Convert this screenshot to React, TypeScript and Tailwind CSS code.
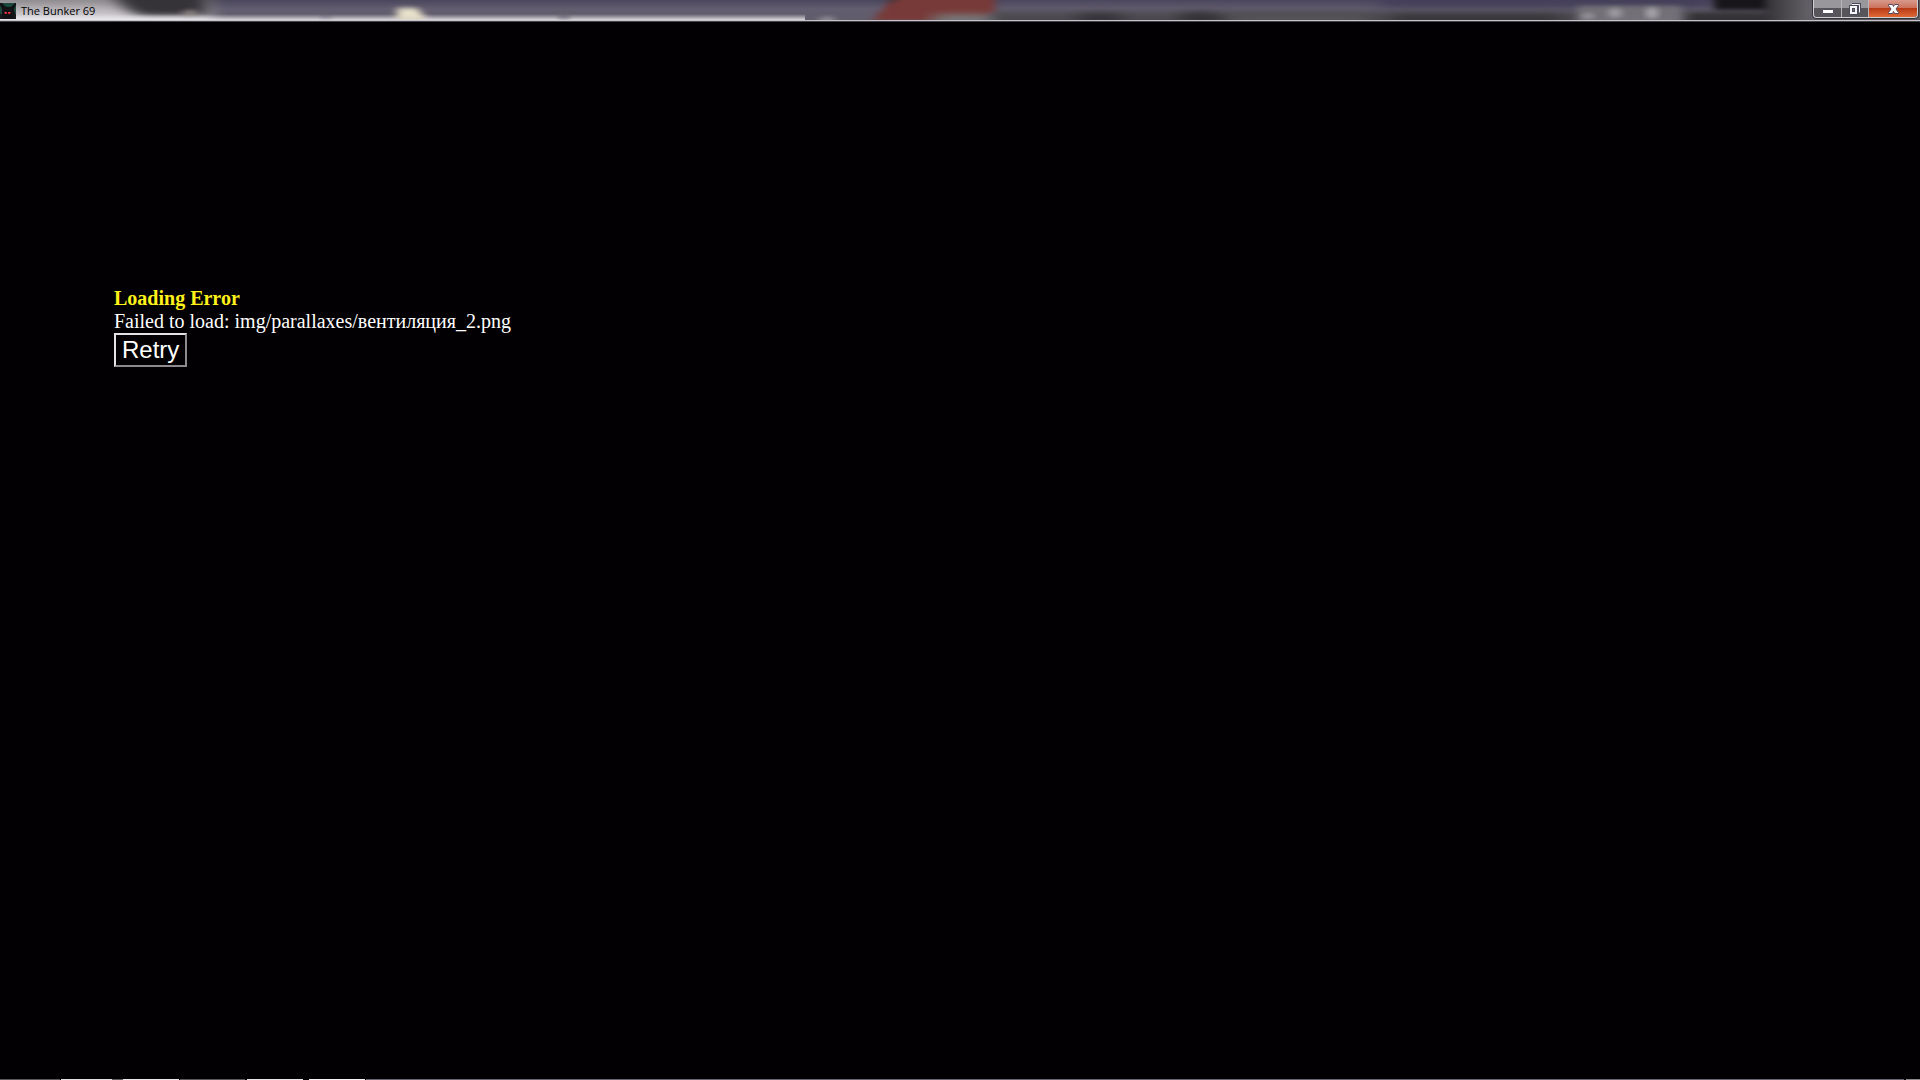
const taskbarStops = [
  { x: 0, w: 60, color: "#5d585f" },
  { x: 61, w: 51, color: "#e6e0e6" },
  { x: 112, w: 11, color: "#5f5a62" },
  { x: 123, w: 56, color: "#eee8ee" },
  { x: 180, w: 65, color: "#5d585f" },
  { x: 247, w: 56, color: "#ece6ec" },
  { x: 309, w: 56, color: "#f7f3f7" },
  { x: 366, w: 1538, color: "#6a6570" },
  { x: 1906, w: 14, color: "#8b8890" },
];

function GlassBackdrop() {
  return (
    <svg
      className="absolute inset-0 h-full w-full"
      viewBox="0 0 1920 22"
      preserveAspectRatio="none"
      aria-hidden="true"
    >
      <defs>
        <linearGradient id="base" x1="0" y1="0" x2="0" y2="1">
          <stop offset="0" stopColor="#4a465c" />
          <stop offset="0.4" stopColor="#625d6f" />
          <stop offset="1" stopColor="#615c69" />
        </linearGradient>
        <linearGradient id="glow" x1="0" y1="0" x2="0" y2="1">
          <stop offset="0" stopColor="#e8e5ea" stopOpacity="0" />
          <stop offset="1" stopColor="#f0edf2" />
        </linearGradient>
        <linearGradient id="left" x1="0" y1="0" x2="0" y2="1">
          <stop offset="0.2" stopColor="#8b878b" />
          <stop offset="0.5" stopColor="#c4c1c6" />
          <stop offset="0.8" stopColor="#e2e0e4" />
        </linearGradient>
        <linearGradient id="frame" x1="0" y1="0" x2="1" y2="0">
          <stop offset="0" stopColor="#343236" />
          <stop offset="1" stopColor="#6a676d" />
        </linearGradient>
        <filter id="soft" x="-20%" y="-80%" width="140%" height="260%" colorInterpolationFilters="sRGB">
          <feGaussianBlur stdDeviation="9 3" />
        </filter>
        <filter id="spot" x="-50%" y="-50%" width="200%" height="200%" colorInterpolationFilters="sRGB">
          <feGaussianBlur stdDeviation="4 2" />
        </filter>
      </defs>

      <rect width="1920" height="22" fill="url(#base)" />

      {/* windows behind the glass, left side */}
      <rect x="-40" y="-8" width="250" height="40" fill="url(#left)" filter="url(#soft)" />
      <path d="M108 -8h100v24h-58q-22 0-34-18z" fill="#353238" filter="url(#soft)" />
      <ellipse cx="190" cy="14" rx="8" ry="4" fill="#8b8483" filter="url(#spot)" />
      <rect x="0" y="14" width="805" height="7" fill="url(#glow)" />
      <rect x="322" y="13" width="8" height="5" fill="#686371" opacity="0.7" filter="url(#spot)" />
      <rect x="560" y="13" width="8" height="6" fill="#686371" filter="url(#spot)" />
      <path d="M397 8h20l10 12h-30z" fill="#e8e1cb" filter="url(#spot)" />
      <ellipse cx="827" cy="20" rx="8" ry="3" fill="#9b97a0" filter="url(#spot)" />

      {/* windows behind the glass, right side */}
      <path d="M985 12h780v16H975z" fill="#4b494e" filter="url(#soft)" />
      <path d="M895 -5h100v16l-20 10H872z" fill="#783a38" filter="url(#spot)" />
      <path d="M890 -4h10l-10 8z" fill="#332c35" filter="url(#spot)" />
      <rect x="934" y="14" width="56" height="12" fill="#777577" filter="url(#soft)" />
      <ellipse cx="1100" cy="18" rx="25" ry="5" fill="#343238" filter="url(#soft)" />
      <ellipse cx="1200" cy="18" rx="22" ry="6" fill="#333136" filter="url(#soft)" />
      <rect x="1235" y="14" width="130" height="12" fill="#555357" filter="url(#soft)" />
      <rect x="1380" y="-8" width="330" height="15" fill="#45405a" filter="url(#soft)" />
      <rect x="1390" y="14" width="170" height="12" fill="#39373b" filter="url(#soft)" />
      <rect x="1577" y="6" width="105" height="20" rx="4" fill="#737077" filter="url(#spot)" />
      <ellipse cx="1588" cy="16" rx="5" ry="3" fill="#a5a3a8" filter="url(#spot)" />
      <ellipse cx="1615" cy="13" rx="6" ry="5" fill="#a5a3a8" filter="url(#spot)" />
      <ellipse cx="1652" cy="13" rx="5" ry="6" fill="#b4b2b6" filter="url(#spot)" />
      <rect x="1690" y="13" width="120" height="12" fill="#343236" filter="url(#spot)" />
      <rect x="1714" y="-6" width="70" height="16" fill="#171519" filter="url(#spot)" />
      <rect x="1765" y="-8" width="50" height="36" fill="url(#frame)" filter="url(#spot)" />
      <rect x="1814" y="-8" width="120" height="36" fill="#5c595f" />

      <rect y="20" width="1920" height="1" fill="#c5c2c9" />
      <rect y="21" width="1920" height="1" fill="#454249" />
    </svg>
  );
}

function AppIcon() {
  return (
    <svg className="h-4 w-4" viewBox="0 0 16 16" aria-hidden="true">
      <rect width="16" height="16" fill="#1d4a3e" />
      <path d="M0 0h2l3 3 2 1h3l2-1 3-3h1v2l-2 4 1 5 1 5H1l1-5V6L0 2z" fill="#101216" />
      <path d="M0 11h2v5H0zM14 11h2v5h-2z" fill="#181b1e" />
      <path d="M4 9h3v2H5zM8 9h3l-1 2H8z" fill="#c51f32" />
      <path d="M5 9h1v1H5zM9 9h1v1H9z" fill="#ff5361" />
    </svg>
  );
}

function WindowControls() {
  return (
    <div className="relative flex h-[18px] w-[105px] rounded-b border border-t-0 border-[#d0ced2] shadow-[0_0_0_1px_#353238]">
      <button
        aria-label="Minimize"
        className="flex w-7 items-center justify-center rounded-bl-sm border-r border-[#b7b4ba] bg-linear-to-b from-[#99969c] from-50% to-[#57545a] to-50%"
      >
        <svg className="h-4 w-4" viewBox="0 0 16 16">
          <rect x="2.5" y="8.5" width="11" height="4" rx="0.5" fill="#fff" stroke="#52505f" />
        </svg>
      </button>
      <button
        aria-label="Restore"
        className="flex w-[27px] items-center justify-center border-r border-[#b7b4ba] bg-linear-to-b from-[#99969c] from-50% to-[#57545a] to-50%"
      >
        <svg className="h-4 w-4" viewBox="0 0 16 16">
          <path d="M5 3.5h7.500v8" fill="none" stroke="#4c4b5c" strokeWidth="3" />
          <path d="M5 3.5h7.500v8" fill="none" stroke="#f4f4f6" />
          <rect x="2.5" y="4.5" width="8" height="9" fill="#f6f6f8" stroke="#4c4b5c" />
          <rect x="5.5" y="7.5" width="2" height="3" fill="#77747b" stroke="#4c4b5c" />
        </svg>
      </button>
      <button
        aria-label="Close"
        className="flex flex-1 items-center justify-center rounded-br-sm bg-[linear-gradient(#d99a8c_0%,#cb6f5a_50%,#b93a17_50%,#e06a34_100%)]"
      >
        <svg className="h-4 w-4" viewBox="0 0 16 16">
          <path
            d="M3.5 3.5h4l1 2 1-2h4v1l-2.500 3.500 2.500 3.500v1h-4l-1-2-1 2h-4v-1l2.500-3.500-2.500-3.500z"
            fill="#fafafc"
            stroke="#57485a"
          />
        </svg>
      </button>
    </div>
  );
}

function TitleBar() {
  return (
    <header className="relative flex h-[22px] items-start justify-between overflow-hidden pr-[2px]">
      <GlassBackdrop />
      <div className="relative flex items-center gap-[5px] pt-[3px]">
        <AppIcon />
        <h1 className="font-['Open_Sans',sans-serif] text-[11px] leading-4 text-black">The Bunker 69</h1>
      </div>
      <WindowControls />
    </header>
  );
}

export default function App() {
  return (
    <div className="flex min-h-screen flex-col bg-[#020002]">
      <TitleBar />
      <main className="flex-1 px-[114px] pt-[265px] font-['Liberation_Serif',serif] text-[20px] leading-[23px] text-white">
        <h2 className="font-bold text-[#fff11a]">Loading Error</h2>
        <p>Failed to load: img/parallaxes/вентиляция_2.png</p>
        <button className="block border-2 border-t-[#e3e3e3] border-r-[#8c8a8c] border-b-[#8c8a8c] border-l-[#e3e3e3] px-[6px] font-['Liberation_Sans',sans-serif] text-[24px] leading-[30px]">
          Retry
        </button>
      </main>
      <svg className="h-px w-full" viewBox="0 0 1920 1" preserveAspectRatio="none" aria-hidden="true">
        {taskbarStops.map((s) => (
          <rect key={s.x} x={s.x} width={s.w} height="1" fill={s.color} />
        ))}
      </svg>
    </div>
  );
}
